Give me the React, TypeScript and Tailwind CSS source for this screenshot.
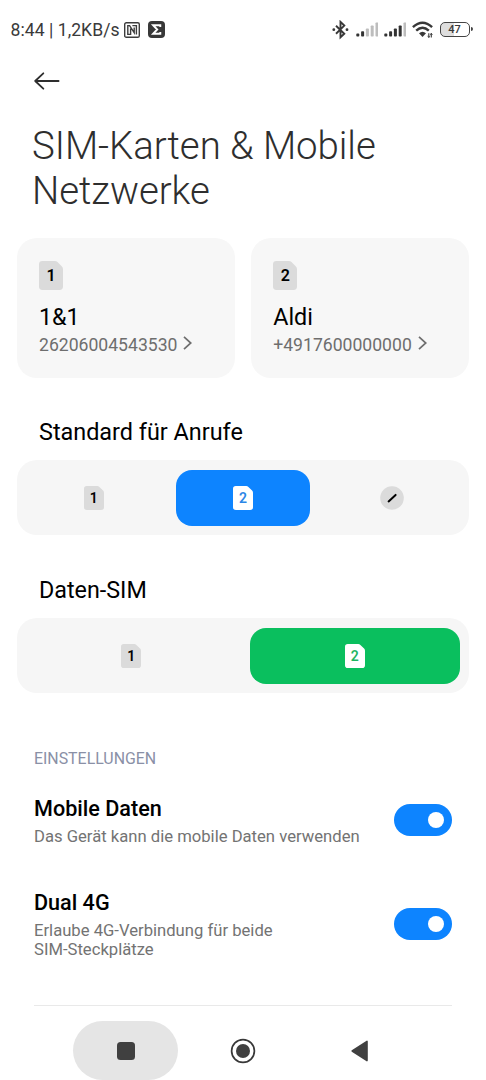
import React from "react";

type Tone = "gray" | "blue" | "green";

const toneText: Record<Tone, string> = {
  gray: "text-black",
  blue: "text-[#2b86e6]",
  green: "text-[#1fb562]",
};

function SimIcon({ n, tone = "gray", large = false }: { n: number; tone?: Tone; large?: boolean }) {
  return (
    <span className={`relative block ${large ? "h-[29px] w-6" : "h-6 w-5"} ${toneText[tone]}`}>
      <svg viewBox="0 0 20 24" preserveAspectRatio="none" className="block h-full w-full">
        <path
          d="M2.8 0H13.2Q14.5 0 15.4.9L19.1 4.6Q20 5.5 20 6.8V21.2Q20 24 17.2 24H2.8Q0 24 0 21.2V2.8Q0 0 2.8 0Z"
          fill={tone === "gray" ? "#dbdbdb" : "#ffffff"}
        />
      </svg>
      <span
        className={`absolute inset-0 flex items-center justify-center leading-none ${
          large ? "pt-px text-[16px] font-semibold" : "pt-px text-[14px] font-semibold"
        }`}
      >
        {n}
      </span>
    </span>
  );
}

function StatusBar() {
  return (
    <header className="flex h-[60px] items-center pl-[10.5px] pr-[13.5px] text-[#3a3a3a]">
      <span className="w-[109.5px] whitespace-nowrap text-[17.6px] leading-5 tracking-[0.04px]">8:44 | 1,2KB/s</span>
      <svg viewBox="0 0 16 16" className="ml-1 mt-[-1px] h-4 w-4" fill="none" stroke="#3d3d3d">
        <rect x=".7" y=".7" width="14.6" height="14.6" rx="1.6" strokeWidth="1.4" />
        <path d="M3.8 12.9V3.6H5.6L10.2 10.6V5.6M3.8 12.4H6.6V6.6M8.4 3.6H12.4V12.6" strokeWidth="1.4" />
      </svg>
      <svg viewBox="0 0 17 17" className="ml-2 mt-[-1px] h-[17px] w-[17px]">
        <rect width="17" height="17" rx="4" fill="#383838" />
        <path d="M12.3 6V4.2H5.1L9.2 8.5 5.1 12.8H12.3V11" fill="none" stroke="#fff" strokeWidth="1.9" />
      </svg>
      <div className="ml-auto flex items-center">
        <svg viewBox="0 0 17 20" className="mr-[2px] h-5 w-[17px]" fill="none" stroke="#383838" strokeWidth="1.9">
          <path d="M4 5.8L12.3 13.7 8.5 17.3V1.9L12.3 5.6 4 13.7" />
          <circle cx="1.8" cy="9.7" r="1.4" fill="#383838" stroke="none" />
          <circle cx="15" cy="9.7" r="1.4" fill="#383838" stroke="none" />
        </svg>
        <SignalBars active={2} className="ml-[5px]" />
        <SignalBars active={4} className="ml-[6px]" />
        <svg viewBox="0 0 22 18" className="ml-[6px] mt-[-1px] h-[18px] w-[22px]" fill="none" stroke="#383838">
          <path d="M.9 6.2Q10.5-2.6 20.1 6.2M4.2 9.6Q10.5 3.8 16.8 9.6" strokeWidth="2.4" />
          <path d="M7 12.3Q10.5 9 14 12.3L10.5 16Z" fill="#383838" stroke="none" />
          <path d="M16.8 12.3V16.5M19.3 12.3V16.5" strokeWidth="1.1" />
          <path d="M15.6 14.8L16.8 16.6 18 14.8M18.2 14L19.3 12.2 20.5 14" strokeWidth=".7" />
        </svg>
        <div className="ml-[6px] mt-[-2px] flex items-center">
          <div className="flex h-[15px] w-[30px] items-center justify-center rounded-[5px] border-[1.5px] border-[#444] bg-[linear-gradient(90deg,#dedede_45%,#fff_45%)] text-[11px] font-medium leading-none">
            47
          </div>
          <div className="ml-px h-1 w-[2px] rounded-r bg-[#444]" />
        </div>
      </div>
    </header>
  );
}

function SignalBars({ active, className }: { active: number; className: string }) {
  const heights = [3, 5.3, 8.2, 11.2, 14.2];
  return (
    <svg viewBox="0 0 22 15" className={`mt-[-1px] h-[15px] w-[22px] ${className}`}>
      {heights.map((h, i) => (
        <rect key={h} x={0.3 + i * 4.8} y={14.6 - h} width="3" height={h} rx=".8" fill={i < active ? "#333333" : "#bdbdbd"} />
      ))}
    </svg>
  );
}

function SimCard({ n, name, number }: { n: number; name: string; number: string }) {
  return (
    <section className="h-[139.5px] flex-1 rounded-[20px] bg-[#f7f7f7] pl-[22px] pt-[22.5px]">
      <SimIcon n={n} large />
      <h2 className="mt-[13px] text-[23.3px] leading-7 text-black">{name}</h2>
      <p className="mt-[4px] flex items-center text-[17.6px] leading-5 text-[#6e6e6e]">
        {number}
        <svg viewBox="0 0 9 14" className="mb-[3px] ml-[6px] h-[14px] w-[9px]" fill="none" stroke="#6e6e6e" strokeWidth="1.7">
          <path d="M1 .8L7.8 7 1 13.2" />
        </svg>
      </p>
    </section>
  );
}

function Segmented({ children, className }: { children: React.ReactNode; className: string }) {
  return <div className={`flex h-[75px] rounded-[20px] bg-[#f6f6f6] p-[9.5px] ${className}`}>{children}</div>;
}

function Segment({ children, className = "" }: { children: React.ReactNode; className?: string }) {
  return (
    <button type="button" className={`flex flex-1 items-center justify-center rounded-[16px] ${className}`}>
      {children}
    </button>
  );
}

function Setting({ title, children, className }: { title: string; children: React.ReactNode; className: string }) {
  return (
    <div className={`flex items-center justify-between pl-[34px] pr-[34px] ${className}`}>
      <div>
        <h3 className="text-[21.6px] font-medium leading-[26px] text-black">{title}</h3>
        <p className="mt-[5px] whitespace-nowrap text-[16.65px] leading-[19.5px] text-[#737373]">{children}</p>
      </div>
      <div className="mb-[2px] flex h-8 w-[58px] items-center justify-end rounded-full bg-[#0d84ff] pr-2">
        <div className="h-4 w-4 rounded-full bg-white" />
      </div>
    </div>
  );
}

export default function App() {
  return (
    <div className="flex h-[1080px] w-[486px] flex-col overflow-hidden bg-white font-[Roboto,sans-serif]">
      <StatusBar />
      <div className="flex h-[41px] items-center pl-[34px]">
        <svg viewBox="0 0 26 18" className="h-[18px] w-[26px]" fill="none" stroke="#2e2e2e" strokeWidth="1.8" strokeLinecap="round" strokeLinejoin="round">
          <path d="M24.6 9H1.2M9.3 1.3L1.2 9 9.3 16.7" />
        </svg>
      </div>
      <h1 className="mt-[21.5px] h-[90px] whitespace-nowrap pl-8 text-[38.4px] font-light leading-[45px] tracking-[-0.05px] text-[#2e2e2e]">
        SIM-Karten &amp; Mobile
        <br />
        Netzwerke
      </h1>
      <div className="mt-[25.5px] flex gap-[16.5px] px-[17px]">
        <SimCard n={1} name="1&1" number="26206004543530" />
        <SimCard n={2} name="Aldi" number="+4917600000000" />
      </div>
      <h2 className="mt-10 pl-[39px] text-[23.4px] leading-7 text-black">Standard für Anrufe</h2>
      <Segmented className="mx-[17px] mt-[14.5px] gap-[14.5px]">
        <Segment>
          <SimIcon n={1} />
        </Segment>
        <Segment className="bg-[#0d84ff]">
          <SimIcon n={2} tone="blue" />
        </Segment>
        <Segment>
          <svg viewBox="0 0 24 24" className="h-6 w-6">
            <circle cx="12" cy="12" r="11.8" fill="#dbdbdb" />
            <path d="M8.6 15.4L15.6 8.9" stroke="#000" strokeWidth="2" strokeLinecap="round" />
          </svg>
        </Segment>
      </Segmented>
      <h2 className="mt-[41px] pl-[39px] text-[23.3px] leading-7 text-black">Daten-SIM</h2>
      <Segmented className="mx-[17px] mt-[14px] gap-[14px]">
        <Segment>
          <SimIcon n={1} />
        </Segment>
        <Segment className="bg-[#0abf5e]">
          <SimIcon n={2} tone="green" />
        </Segment>
      </Segmented>
      <h2 className="mt-[55.5px] pl-[34px] text-[15.9px] leading-5 text-[#8a90a6]">EINSTELLUNGEN</h2>
      <Setting title="Mobile Daten" className="mt-[27px]">
        Das Gerät kann die mobile Daten verwenden
      </Setting>
      <Setting title="Dual 4G" className="mt-[43.8px]">
        Erlaube 4G-Verbindung für beide
        <br />
        SIM-Steckplätze
      </Setting>
      <div className="mx-[34px] mt-[45.5px] h-px shrink-0 bg-[#e9e9e9]" />
      <nav className="mt-auto flex h-[59px] shrink-0 items-center pl-[73px]">
        <div className="flex h-[59px] w-[105px] items-center justify-center rounded-full bg-[#e5e5e5]">
          <div className="h-[18px] w-[18px] rounded-[3.5px] bg-[#404040]" />
        </div>
        <svg viewBox="0 0 26 26" className="ml-[52px] h-[26px] w-[26px]">
          <circle cx="13" cy="13" r="11.4" fill="none" stroke="#383838" strokeWidth="1.7" />
          <circle cx="13" cy="13" r="7" fill="#404040" />
        </svg>
        <svg viewBox="0 0 17 22" className="ml-[95px] h-[22px] w-[17px]">
          <path d="M1.2 11L16 1.4V20.6Z" fill="#404040" stroke="#404040" strokeWidth="1.6" strokeLinejoin="round" />
        </svg>
      </nav>
    </div>
  );
}
